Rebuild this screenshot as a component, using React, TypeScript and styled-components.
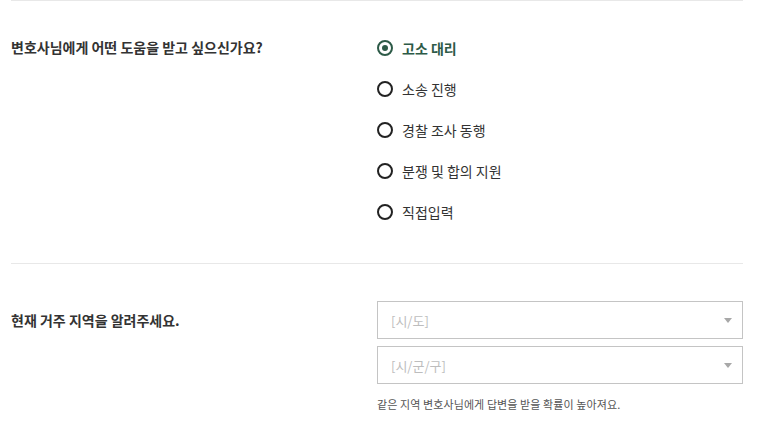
import React, { useState } from "react";
import styled, { createGlobalStyle } from "styled-components";

const GlobalStyle = createGlobalStyle`
  body {
    margin: 0;
    background: #fff;
    font-family: "Noto Sans CJK KR", "Noto Sans", sans-serif;
    color: #333;
  }
`;

const Page = styled.div`
  margin: 0 36px 0 11px;
`;

const Section = styled.section<{ $top: number; $bottom: number }>`
  display: grid;
  grid-template-columns: 1fr 1fr;
  border-top: 1px solid #e8e8e8;
  padding-top: ${(p) => p.$top}px;
  padding-bottom: ${(p) => p.$bottom}px;
`;

const Question = styled.h3<{ $lh: number }>`
  margin: 0;
  font-size: 14px;
  font-weight: 700;
  letter-spacing: 0;
  line-height: ${(p) => p.$lh}px;
  color: #333;
`;

const Options = styled.div`
  display: flex;
  flex-direction: column;
`;

const OptionRow = styled.label<{ $active: boolean }>`
  display: flex;
  align-items: center;
  gap: 9px;
  height: 41px;
  cursor: pointer;
  font-size: 14px;
  font-weight: ${(p) => (p.$active ? 700 : 400)};
  color: ${(p) => (p.$active ? "#2d5a47" : "#333")};
`;

const Circle = styled.span<{ $active: boolean }>`
  box-sizing: border-box;
  width: 16px;
  height: 16px;
  border-radius: 50%;
  border: 2px solid ${(p) => (p.$active ? "#2d5a47" : "#222")};
  display: flex;
  align-items: center;
  justify-content: center;

  &::after {
    content: "";
    width: 6px;
    height: 6px;
    border-radius: 50%;
    background: #2d5a47;
    display: ${(p) => (p.$active ? "block" : "none")};
  }
`;

const Fields = styled.div`
  display: flex;
  flex-direction: column;
  gap: 7px;
`;

const SelectBox = styled.div`
  box-sizing: border-box;
  height: 38px;
  border: 1px solid #c4c4c4;
  display: flex;
  align-items: center;
  justify-content: space-between;
  padding: 0 10px 0 13px;
  font-size: 13px;
  color: #bdbdbd;
  cursor: pointer;
`;

const Caret = styled.span`
  width: 0;
  height: 0;
  border-left: 4px solid transparent;
  border-right: 4px solid transparent;
  border-top: 5px solid #a8a8a8;
`;

const Hint = styled.p`
  margin: 5px 0 0;
  font-size: 11px;
  letter-spacing: 0.1px;
  color: #555;
`;

const options = ["고소 대리", "소송 진행", "경찰 조사 동행", "분쟁 및 합의 지원", "직접입력"];

export default function App() {
  const [selected, setSelected] = useState(0);

  return (
    <Page>
      <GlobalStyle />
      <Section $top={26} $bottom={31}>
        <Question $lh={41}>변호사님에게 어떤 도움을 받고 싶으신가요?</Question>
        <Options>
          {options.map((o, i) => (
            <OptionRow key={o} $active={selected === i} onClick={() => setSelected(i)}>
              <Circle $active={selected === i} />
              {o}
            </OptionRow>
          ))}
        </Options>
      </Section>
      <Section $top={37} $bottom={20}>
        <Question $lh={38}>현재 거주 지역을 알려주세요.</Question>
        <Fields>
          <SelectBox>
            [시/도]
            <Caret />
          </SelectBox>
          <SelectBox>
            [시/군/구]
            <Caret />
          </SelectBox>
          <Hint>같은 지역 변호사님에게 답변을 받을 확률이 높아져요.</Hint>
        </Fields>
      </Section>
    </Page>
  );
}
